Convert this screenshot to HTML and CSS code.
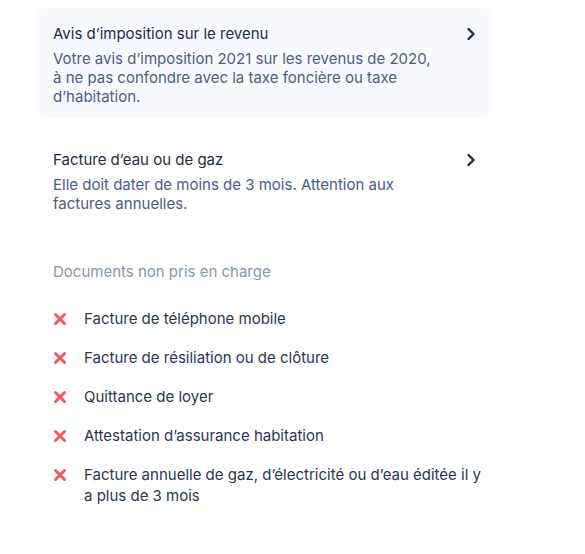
FILE: index.html
```html
<!DOCTYPE html>
<html lang="fr">
<head>
<meta charset="utf-8">
<link rel="stylesheet" href="styles.css">
</head>
<body>
<main class="panel">
  <a class="doc doc--active" href="#">
    <div class="doc-text">
      <div class="doc-title">Avis d’imposition sur le revenu</div>
      <div class="doc-desc">Votre avis d’imposition 2021 sur les revenus de 2020, à ne pas confondre avec la taxe foncière ou taxe d’habitation.</div>
    </div>
    <svg class="chev" width="10" height="14" viewBox="0 0 10 14"><path d="M2.5 2 L7.5 7 L2.5 12" fill="none" stroke="#1e2a50" stroke-width="2.4" stroke-linecap="round" stroke-linejoin="round"/></svg>
  </a>
  <a class="doc" href="#">
    <div class="doc-text">
      <div class="doc-title">Facture d’eau ou de gaz</div>
      <div class="doc-desc">Elle doit dater de moins de 3 mois. Attention aux factures annuelles.</div>
    </div>
    <svg class="chev" width="10" height="14" viewBox="0 0 10 14"><path d="M2.5 2 L7.5 7 L2.5 12" fill="none" stroke="#1e2a50" stroke-width="2.4" stroke-linecap="round" stroke-linejoin="round"/></svg>
  </a>
  <section class="refused">
    <h2 class="refused-title">Documents non pris en charge</h2>
    <ul class="refused-list">
      <li><svg class="x" width="14" height="14" viewBox="0 0 14 14"><path d="M2.5 2.5 L11.5 11.5 M11.5 2.5 L2.5 11.5" stroke="#ef5b5b" stroke-width="3" stroke-linecap="round"/></svg><span>Facture de téléphone mobile</span></li>
      <li><svg class="x" width="14" height="14" viewBox="0 0 14 14"><path d="M2.5 2.5 L11.5 11.5 M11.5 2.5 L2.5 11.5" stroke="#ef5b5b" stroke-width="3" stroke-linecap="round"/></svg><span>Facture de résiliation ou de clôture</span></li>
      <li><svg class="x" width="14" height="14" viewBox="0 0 14 14"><path d="M2.5 2.5 L11.5 11.5 M11.5 2.5 L2.5 11.5" stroke="#ef5b5b" stroke-width="3" stroke-linecap="round"/></svg><span>Quittance de loyer</span></li>
      <li><svg class="x" width="14" height="14" viewBox="0 0 14 14"><path d="M2.5 2.5 L11.5 11.5 M11.5 2.5 L2.5 11.5" stroke="#ef5b5b" stroke-width="3" stroke-linecap="round"/></svg><span>Attestation d’assurance habitation</span></li>
      <li><svg class="x" width="14" height="14" viewBox="0 0 14 14"><path d="M2.5 2.5 L11.5 11.5 M11.5 2.5 L2.5 11.5" stroke="#ef5b5b" stroke-width="3" stroke-linecap="round"/></svg><span>Facture annuelle de gaz, d’électricité ou d’eau éditée il y a plus de 3 mois</span></li>
    </ul>
  </section>
</main>
</body>
</html>
```
FILE: styles.css
```css
* { box-sizing: border-box; }
html, body { margin: 0; background: #fff; }
body {
  font-family: Inter, "Noto Sans", sans-serif;
  font-size: 15px;
  color: #1f2a4d;
}
.panel {
  width: 454px;
  margin: 8px 0 0 37px;
  display: flex;
  flex-direction: column;
  gap: 16px;
}
.doc {
  display: flex;
  justify-content: space-between;
  align-items: flex-start;
  padding: 16px 16px 12px;
  border-radius: 10px;
  text-decoration: none;
  color: inherit;
}
.doc--active { background: #f9fafd; }
.doc-text { width: 385px; }
.doc-title {
  line-height: 20px;
  color: #1f2a4d;
  margin-bottom: 5px;
}
.doc-desc {
  line-height: 19px;
  color: #4d5c84;
}
.chev { margin: 3px -1px 0 0; }
.refused { padding: 21px 2px 0 16px; }
.refused-title {
  margin: 0;
  font-size: 15px;
  font-weight: 400;
  line-height: 20px;
  color: #8893b8;
}
.refused-list {
  list-style: none;
  margin: 26px 0 0;
  padding: 0;
  display: flex;
  flex-direction: column;
  gap: 18px;
}
.refused-list li {
  display: flex;
  align-items: flex-start;
  gap: 17px;
  line-height: 21px;
  color: #2b3656;
}
.x { flex: none; margin: 3.5px 0 0 0; }
```
